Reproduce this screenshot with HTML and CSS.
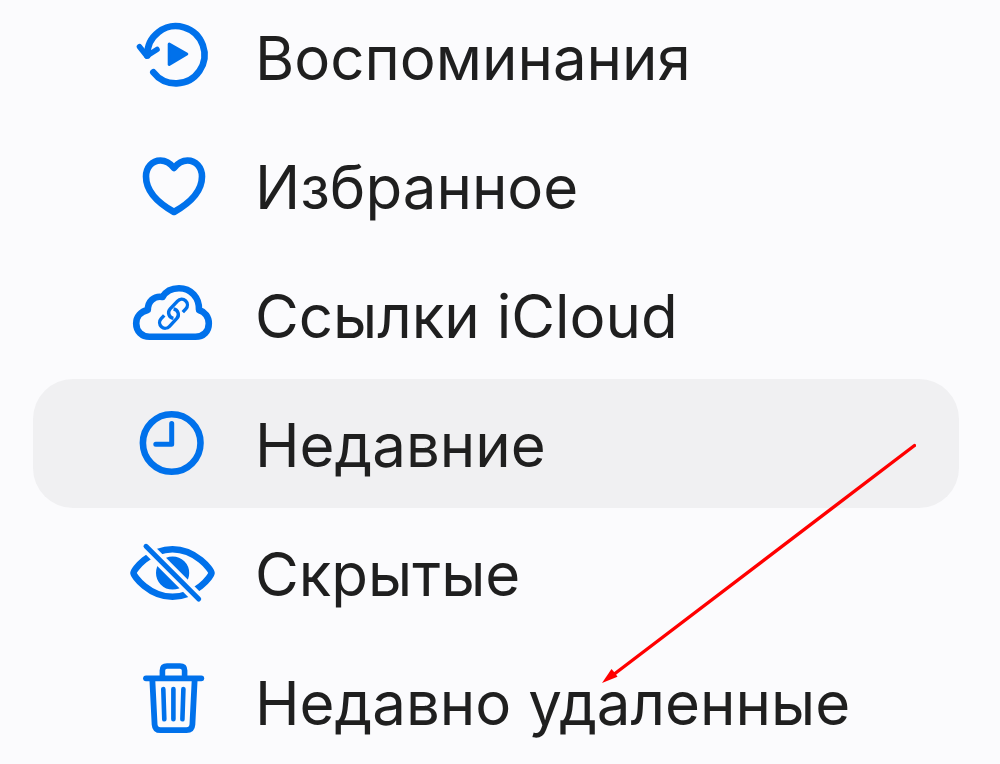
FILE: index.html
```
<!DOCTYPE html>
<html lang="ru">
<head>
  <meta charset="UTF-8">
  <meta name="viewport" content="width=device-width, initial-scale=1.0">
  <title>Фото</title>
  <link rel="stylesheet" href="styles.css">
</head>
<body>
  <nav class="sidebar">
    <a class="item" href="#memories">
      <svg class="icon" viewBox="0 0 96 96" aria-hidden="true">
        <path d="M22.3 47.5A28.6 28.6 0 1 1 28.3 64.3" stroke-width="6.6"/>
        <path d="M14.5 38.8L21.8 48L32 41.5" stroke-width="5.6"/>
        <path class="fill" d="M44.2 36L61.8 46L44.2 56.4Z" stroke-width="3"/>
      </svg>
      <span class="label">Воспоминания</span>
    </a>
    <a class="item" href="#favorites">
      <svg class="icon" viewBox="0 0 96 96" aria-hidden="true">
        <path d="M49 31C45 26 40 23.5 35.5 23.5C27 23.5 21 30.5 21 39.5C21 54 33 66 49 75C65 66 77 54 77 39.5C77 30.5 71 23.5 62.5 23.5C58 23.5 53 26 49 31Z" stroke-width="6.6"/>
      </svg>
      <span class="label">Избранное</span>
    </a>
    <a class="item" href="#links">
      <svg class="icon" viewBox="0 0 96 96" aria-hidden="true">
        <path d="M24.5 70.8C17 70.8 11.2 65.5 11.2 57.5C11.2 50.5 16 45.5 22.8 44C22.8 35.5 29 29.5 37.5 31C41 25 47 22.2 54 22.2C66 22.2 74.5 31.5 74 44C80 46 83.8 51 83.8 57.5C83.8 65.5 78.5 70.8 70.5 70.8Z" stroke-width="6.6"/>
        <g class="link" transform="translate(48.5 47.7) rotate(-47)">
          <path d="M7.5 5.7H12A5.7 5.7 0 0 0 12 -5.7H1.2A5.7 5.7 0 0 0 -3.5 3.2"/>
          <path d="M-7.5 -5.7H-12A5.7 5.7 0 0 0 -12 5.7H-1.2A5.7 5.7 0 0 0 3.5 -3.2"/>
        </g>
      </svg>
      <span class="label">Ссылки iCloud</span>
    </a>
    <a class="item active" href="#recents" aria-current="page">
      <svg class="icon" viewBox="0 0 96 96" aria-hidden="true">
        <circle cx="46.7" cy="48" r="28.8" stroke-width="6.6"/>
        <path d="M46.7 28.5V49.3H30.8" stroke-width="5"/>
      </svg>
      <span class="label">Недавние</span>
    </a>
    <a class="item" href="#hidden">
      <svg class="icon" viewBox="0 0 96 96" aria-hidden="true">
        <path d="M8.5 49C8.5 46 24 25.2 47.5 25.2C71 25.2 86.5 46 86.5 49C86.5 52 71 72.8 47.5 72.8C24 72.8 8.5 52 8.5 49Z" stroke-width="6.6"/>
        <circle class="fill" cx="47.6" cy="49" r="15.6" stroke-width="2"/>
        <path class="gap" d="M21 22.3L73.7 75" stroke-width="12"/>
        <path d="M21 22.3L73.7 75" stroke-width="5"/>
      </svg>
      <span class="label">Скрытые</span>
    </a>
    <a class="item" href="#deleted">
      <svg class="icon" viewBox="0 0 96 96" aria-hidden="true">
        <path d="M37.4 25V17.5Q37.4 13 42 13H55Q59.6 13 59.6 17.5V25" stroke-width="5.6"/>
        <path d="M21 25.3H76.3" stroke-width="5.8"/>
        <path d="M27.3 26L29.6 71.5Q30 77.2 35.5 77.2H61.5Q67 77.2 67.4 71.5L69.7 26" stroke-width="5.8"/>
        <path d="M38.3 36L39.3 66.3M48.4 36V66.3M58.4 36L57.4 66.3" stroke-width="4.6"/>
      </svg>
      <span class="label">Недавно удаленные</span>
    </a>
  </nav>

  <!-- pointer to the last item -->
  <svg class="arrow" viewBox="0 0 314 240" aria-hidden="true">
    <path class="arrow-line" d="M312.5 2.5L13 230.5"/>
    <path class="arrow-head" d="M0 240L9.5 226L13 230L15.5 233.8Z"/>
  </svg>
</body>
</html>
```

FILE: styles.css
```
body {
  font-family: Inter, "Noto Sans", sans-serif;
  margin: 0;
  background-color: #fbfbfd;
  color: #1f1f1f;
  overflow: hidden;
}
.sidebar {
  margin: -8px 41px 0 33px;
}
.item {
  display: flex;
  align-items: center;
  gap: 34px;
  height: 129px;
  padding-left: 92px;
  border-radius: 40px;
  color: inherit;
  text-decoration: none;
}
.item.active {
  background-color: #f0f0f2;
}
.icon {
  flex: none;
  width: 96px;
  height: 96px;
  margin-bottom: 2px;
  fill: none;
  stroke: #0071eb;
  stroke-linecap: round;
  stroke-linejoin: round;
}
.icon .fill {
  fill: #0071eb;
}
.icon .gap {
  stroke: #fbfbfd;
  stroke-linecap: butt;
}
.icon .link {
  stroke-width: 3.4;
  stroke-linecap: butt;
}
.label {
  padding-top: 2px;
  font-size: 60px;
  line-height: 72px;
  white-space: nowrap;
}
.arrow {
  position: absolute;
  left: 602px;
  top: 443px;
  width: 314px;
  height: 240px;
  pointer-events: none;
}
.arrow-line {
  fill: none;
  stroke: #ff0000;
  stroke-width: 3.4;
  stroke-linecap: round;
}
.arrow-head {
  fill: #ff0000;
}
```
